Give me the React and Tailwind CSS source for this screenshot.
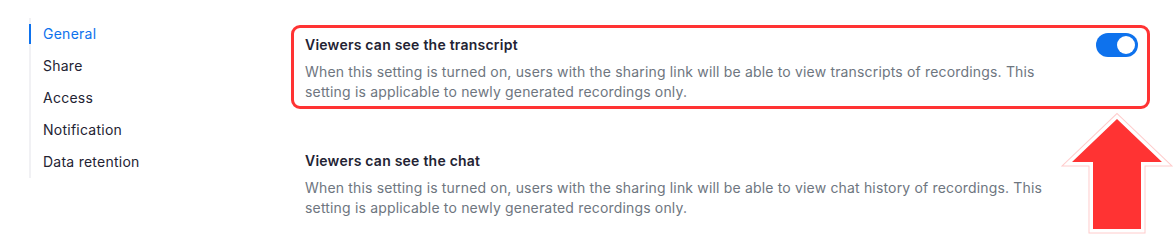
import React, { useState } from "react";

const navItems = ["General", "Share", "Access", "Notification", "Data retention"];

const Toggle = ({ on, onChange }) => (
  <button
    type="button"
    onClick={onChange}
    className={`relative w-[42px] h-[24px] rounded-full shrink-0 transition ${
      on ? "bg-[#0e72ed]" : "bg-[#babacc]"
    }`}
  >
    <span
      className={`absolute top-[3px] w-[18px] h-[18px] rounded-full bg-white transition-all ${
        on ? "left-[21px]" : "left-[3px]"
      }`}
    ></span>
  </button>
);

const Setting = ({ title, text, highlighted, toggle }) => (
  <div
    className={`border-[3px] rounded-[9px] pl-[11px] pr-[9px] pt-[5px] pb-[4px] ${
      highlighted ? "border-[#ff3333]" : "border-transparent"
    }`}
  >
    <div className="flex items-center justify-between h-[24px]">
      <h3 className="text-[14px] leading-[20px] font-semibold tracking-[0.23px] text-[#232333]">
        {title}
      </h3>
      {toggle}
    </div>
    <p className="mt-[5px] max-w-[755px] text-[14px] leading-[20px] tracking-[0.17px] text-[#6e7680]">
      {text}
    </p>
  </div>
);

export default function App() {
  const [transcript, setTranscript] = useState(true);

  return (
    <div
      className="relative w-[1176px] h-[244px] bg-white overflow-hidden"
      style={{ fontFamily: "Inter, 'Noto Sans', sans-serif" }}
    >
      <div className="flex">
        {/* Sidebar nav */}
        <div className="w-[291px] shrink-0 pl-[29px] pt-[18px]">
          <ul className="border-l-2 border-[#f1f1f4]">
            {navItems.map((item, i) => (
              <li key={item} className="relative h-[32px] flex items-center pl-[12px]">
                {i === 0 && (
                  <span className="absolute -left-[2px] top-[6px] w-[2px] h-[20px] bg-[#0e72ed]"></span>
                )}
                <span
                  className={`text-[14px] leading-[20px] tracking-[0.25px] ${
                    i === 0 ? "text-[#0e72ed]" : "text-[#232333]"
                  }`}
                >
                  {item}
                </span>
              </li>
            ))}
          </ul>
        </div>

        {/* Settings */}
        <div className="w-[859px] pt-[25px] flex flex-col gap-[32px]">
          <Setting
            highlighted
            title="Viewers can see the transcript"
            text="When this setting is turned on, users with the sharing link will be able to view transcripts of recordings. This setting is applicable to newly generated recordings only."
            toggle={<Toggle on={transcript} onChange={() => setTranscript(!transcript)} />}
          />
          <Setting
            title="Viewers can see the chat"
            text="When this setting is turned on, users with the sharing link will be able to view chat history of recordings. This setting is applicable to newly generated recordings only."
          />
        </div>
      </div>

      {/* Annotation arrow */}
      <svg
        className="absolute left-0 top-0 pointer-events-none"
        width="1176"
        height="244"
        viewBox="0 0 1176 244"
      >
        <polygon
          points="1117,119 1162,162 1141,162 1141,229 1093,229 1093,162 1072,162"
          fill="none"
          stroke="#ffcccc"
          strokeWidth="9"
          strokeLinejoin="miter"
        />
        <polygon
          points="1117,119 1162,162 1141,162 1141,229 1093,229 1093,162 1072,162"
          fill="none"
          stroke="#ffffff"
          strokeWidth="7"
          strokeLinejoin="miter"
        />
        <polygon
          points="1117,119 1162,162 1141,162 1141,229 1093,229 1093,162 1072,162"
          fill="#ff3333"
        />
      </svg>
    </div>
  );
}
